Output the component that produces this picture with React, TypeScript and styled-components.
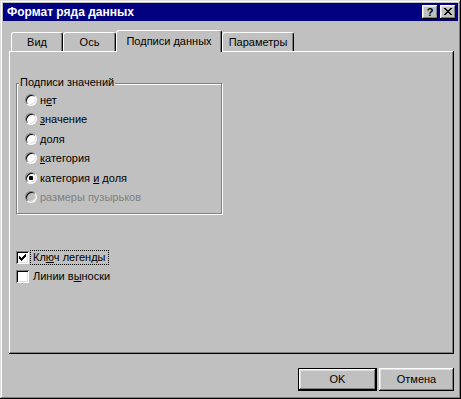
import React from 'react';
import styled, { createGlobalStyle } from 'styled-components';

const Global = createGlobalStyle`
  html, body { margin: 0; padding: 0; background: #c0c0c0; }
  body { font-family: "Liberation Sans", Arial, sans-serif; font-size: 11px; color: #000; }
`;

const Window = styled.div`
  width: 461px;
  height: 399px;
  box-sizing: border-box;
  padding: 3px;
  background: #c0c0c0;
  box-shadow: inset -1px -1px #000, inset 1px 1px #dfdfdf, inset -2px -2px #808080, inset 2px 2px #fff;
  display: flex;
  flex-direction: column;
`;

const TitleBar = styled.div`
  height: 18px;
  background: #000080;
  display: flex;
  align-items: center;
  justify-content: space-between;
  padding-left: 4px;
  padding-right: 2px;
`;

const TitleText = styled.span`
  color: #fff;
  font-weight: bold;
  font-size: 12px;
`;

const CaptionButtons = styled.div`
  display: flex;
  gap: 2px;
`;

const CaptionButton = styled.div`
  width: 16px;
  height: 14px;
  box-sizing: border-box;
  background: #c0c0c0;
  box-shadow: inset -1px -1px #000, inset 1px 1px #fff, inset -2px -2px #808080, inset 2px 2px #dfdfdf;
  display: flex;
  align-items: center;
  justify-content: center;
  font-weight: bold;
  font-size: 11px;
  line-height: 14px;
  padding-bottom: 1px;
`;

const Body = styled.div`
  display: flex;
  flex-direction: column;
  padding: 9px 4px 0 6px;
`;

const TabStrip = styled.div`
  display: flex;
  align-items: flex-end;
  height: 21px;
  padding-left: 2px;
`;

const Tab = styled.div<{ $w: number; $active?: boolean }>`
  width: ${(p) => p.$w}px;
  height: ${(p) => (p.$active ? 22 : 19)}px;
  margin-bottom: ${(p) => (p.$active ? -1 : 0)}px;
  box-sizing: border-box;
  position: relative;
  z-index: ${(p) => (p.$active ? 2 : 0)};
  background: #c0c0c0;
  border-top: 1px solid #fff;
  border-left: 1px solid #fff;
  border-right: 1px solid #000;
  border-radius: 3px 3px 0 0;
  box-shadow: inset -1px 0 #808080;
  display: flex;
  justify-content: center;
  padding-top: ${(p) => (p.$active ? 4 : 3)}px;
  line-height: 13px;
  white-space: nowrap;
`;

const Panel = styled.div`
  height: 303px;
  box-sizing: border-box;
  background: #c0c0c0;
  box-shadow: inset -1px -1px #000, inset 1px 1px #fff, inset -2px -2px #808080;
  padding: 32px 0 0 7px;
  display: flex;
  flex-direction: column;
`;

const GroupBox = styled.div`
  position: relative;
  width: 206px;
  height: 131px;
  box-sizing: border-box;
  border: 1px solid #808080;
  box-shadow: inset 1px 1px #fff, 1px 1px #fff;
  padding: 6px 0 0 8px;
  display: flex;
  flex-direction: column;
`;

const Legend = styled.span`
  position: absolute;
  top: -8px;
  left: 2px;
  padding: 0 1px;
  background: #c0c0c0;
  line-height: 13px;
`;

const RadioRow = styled.div<{ $disabled?: boolean }>`
  height: 19.5px;
  display: flex;
  align-items: center;
  gap: 3px;
  color: ${(p) => (p.$disabled ? '#808080' : '#000')};
  white-space: nowrap;
`;

const RadioCircle = styled.span<{ $disabled?: boolean }>`
  width: 12px;
  height: 12px;
  box-sizing: border-box;
  border-radius: 50%;
  border: 1px solid;
  border-color: #808080 #fff #fff #808080;
  background: ${(p) => (p.$disabled ? '#c0c0c0' : '#fff')};
  box-shadow: inset 1px 1px #000, inset -1px -1px #dfdfdf;
  display: flex;
  align-items: center;
  justify-content: center;
  flex: none;
`;

const Dot = styled.span`
  width: 4px;
  height: 4px;
  border-radius: 1px;
  background: #000;
`;

const CheckList = styled.div`
  margin-top: 34px;
  display: flex;
  flex-direction: column;
`;

const CheckRow = styled.div`
  height: 19px;
  display: flex;
  align-items: center;
  gap: 1px;
  white-space: nowrap;
`;

const CheckBox = styled.span`
  width: 13px;
  height: 13px;
  box-sizing: border-box;
  background: #fff;
  box-shadow: inset 1px 1px #808080, inset -1px -1px #fff, inset 2px 2px #000, inset -2px -2px #dfdfdf;
  display: flex;
  align-items: center;
  justify-content: center;
  flex: none;
`;

const CheckLabel = styled.span<{ $focus?: boolean }>`
  height: 15px;
  box-sizing: border-box;
  border: 1px ${(p) => (p.$focus ? 'dotted #000' : 'solid transparent')};
  padding: 0 3px 0 2px;
  line-height: 13px;
`;

const Footer = styled.div`
  margin-top: 14px;
  display: flex;
  justify-content: flex-end;
  gap: 2px;
`;

const Button = styled.div<{ $default?: boolean }>`
  width: ${(p) => (p.$default ? 79 : 75)}px;
  height: 23px;
  box-sizing: border-box;
  border: ${(p) => (p.$default ? '1px solid #000' : 'none')};
  box-shadow: inset -1px -1px #000, inset 1px 1px #fff, inset -2px -2px #808080, inset 2px 2px #dfdfdf;
  display: flex;
  align-items: center;
  justify-content: center;
  line-height: 13px;
`;

const CloseGlyph = () => (
  <svg width="8" height="7" viewBox="0 0 8 7" shapeRendering="crispEdges">
    <path
      fill="#000"
      d="M0 0h2v1H0z M6 0h2v1H6z M1 1h2v1H1z M5 1h2v1H5z M2 2h4v1H2z M3 3h2v1H3z M2 4h4v1H2z M1 5h2v1H1z M5 5h2v1H5z M0 6h2v1H0z M6 6h2v1H6z"
    />
  </svg>
);

const CheckGlyph = () => (
  <svg width="7" height="7" viewBox="0 0 7 7" shapeRendering="crispEdges">
    <path
      fill="#000"
      d="M6 0h1v1H6z M5 1h2v1H5z M0 2h1v1H0z M4 2h3v1H4z M0 3h2v1H0z M3 3h3v1H3z M0 4h5v1H0z M1 5h3v1H1z M2 6h1v1H2z"
    />
  </svg>
);

type RadioItem = { label: React.ReactNode; checked?: boolean; disabled?: boolean };

const radios: RadioItem[] = [
  { label: <>н<u>е</u>т</> },
  { label: <><u>з</u>начение</> },
  { label: <><u>д</u>оля</> },
  { label: <><u>к</u>атегория</> },
  { label: <>категория <u>и</u> доля</>, checked: true },
  { label: <>размеры пузырьков</>, disabled: true },
];

export default function App() {
  return (
    <>
      <Global />
      <Window>
        <TitleBar>
          <TitleText>Формат ряда данных</TitleText>
          <CaptionButtons>
            <CaptionButton>?</CaptionButton>
            <CaptionButton>
              <CloseGlyph />
            </CaptionButton>
          </CaptionButtons>
        </TitleBar>
        <Body>
          <TabStrip>
            <Tab $w={52}>Вид</Tab>
            <Tab $w={53}>Ось</Tab>
            <Tab $w={106} $active>
              Подписи данных
            </Tab>
            <Tab $w={72}>Параметры</Tab>
          </TabStrip>
          <Panel>
            <GroupBox>
              <Legend>Подписи значений</Legend>
              {radios.map((r, i) => (
                <RadioRow key={i} $disabled={r.disabled}>
                  <RadioCircle $disabled={r.disabled}>{r.checked && <Dot />}</RadioCircle>
                  <span>{r.label}</span>
                </RadioRow>
              ))}
            </GroupBox>
            <CheckList>
              <CheckRow>
                <CheckBox>
                  <CheckGlyph />
                </CheckBox>
                <CheckLabel $focus>
                  Кл<u>ю</u>ч легенды
                </CheckLabel>
              </CheckRow>
              <CheckRow>
                <CheckBox />
                <CheckLabel>
                  Линии в<u>ы</u>носки
                </CheckLabel>
              </CheckRow>
            </CheckList>
          </Panel>
          <Footer>
            <Button $default>OK</Button>
            <Button>Отмена</Button>
          </Footer>
        </Body>
      </Window>
    </>
  );
}
